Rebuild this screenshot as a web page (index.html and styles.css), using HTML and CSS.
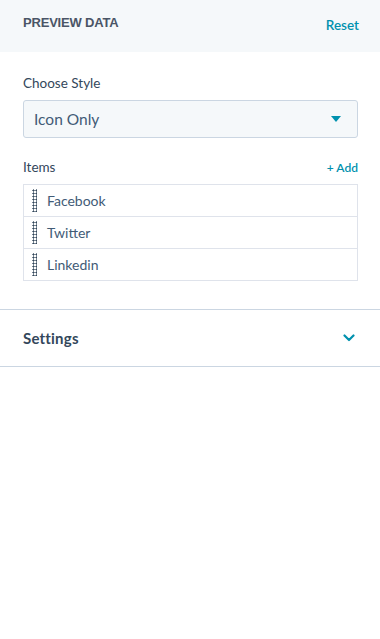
FILE: index.html
```html
<!DOCTYPE html>
<html lang="en">
<head>
    <meta charset="UTF-8">
    <meta name="viewport" content="width=device-width, initial-scale=1.0">
    <title>Preview data</title>
    <link rel="stylesheet" href="styles.css">
</head>
<body>

    <div class="panel-header">
        <span class="panel-title">PREVIEW DATA</span>
        <a class="link reset-link" href="#">Reset</a>
    </div>

    <div class="panel-body">
        <div class="field-label">Choose Style</div>
        <div class="select-box">
            <span>Icon Only</span>
            <span class="select-caret"></span>
        </div>

        <div class="items-head">
            <span class="field-label">Items</span>
            <a class="link add-link" href="#">+ Add</a>
        </div>

        <ul class="item-list">
            <li class="item-row"><span class="drag-handle"></span>Facebook</li>
            <li class="item-row"><span class="drag-handle"></span>Twitter</li>
            <li class="item-row"><span class="drag-handle"></span>Linkedin</li>
        </ul>
    </div>

    <div class="accordion">
        <span class="accordion-title">Settings</span>
        <svg class="chevron" width="12" height="8" viewBox="0 0 12 8">
            <path d="M1.5 1.5 L6 6 L10.5 1.5" fill="none" stroke="#0091ae" stroke-width="2.2" stroke-linecap="round" stroke-linejoin="round"/>
        </svg>
    </div>

</body>
</html>
```

FILE: styles.css
```css
body {
    margin: 0;
    font-family: 'Lato', 'Open Sans', sans-serif;
    color: #33475b;
    background-color: #fff;
}

.link {
    color: #0091ae;
    text-decoration: none;
    font-weight: 600;
}

/* top bar */
.panel-header {
    height: 52px;
    background-color: #f5f8fa;
    display: flex;
    justify-content: space-between;
    padding: 0 21px 0 23px;
    box-sizing: border-box;
}

.panel-title {
    font-family: 'Liberation Sans', Arial, sans-serif;
    font-size: 13px;
    font-weight: 600;
    color: #4a5566;
    margin-top: 15px;
    letter-spacing: -0.2px;
}

.reset-link {
    font-size: 13.5px;
    margin-top: 17px;
}

/* preview fields */
.panel-body {
    padding: 23px 22px 28px 23px;
}

.field-label {
    font-size: 13.5px;
    color: #33475b;
    line-height: 16px;
}

.select-box {
    margin-top: 9px;
    height: 38px;
    box-sizing: border-box;
    border: 1px solid #cbd6e2;
    border-radius: 3px;
    background-color: #f5f8fa;
    display: flex;
    align-items: center;
    justify-content: space-between;
    padding: 0 16px 0 10px;
    font-size: 15.5px;
    color: #425b76;
}

.select-caret {
    width: 0;
    height: 0;
    border-left: 5px solid transparent;
    border-right: 5px solid transparent;
    border-top: 6px solid #0091ae;
}

.items-head {
    margin-top: 21px;
    display: flex;
    justify-content: space-between;
    align-items: center;
}

.add-link {
    font-size: 12px;
}

.item-list {
    list-style: none;
    margin: 9px 0 0 0;
    padding: 0;
    border: 1px solid #dfe3eb;
}

.item-row {
    height: 31px;
    display: flex;
    align-items: center;
    font-size: 14px;
    color: #425b76;
    border-top: 1px solid #dfe3eb;
    padding-left: 8px;
}

.item-row:first-child {
    border-top: none;
}

.drag-handle {
    width: 5px;
    height: 23px;
    margin-right: 10px;
    background-image: radial-gradient(circle, #33475b 0.9px, transparent 1.2px);
    background-size: 3px 3px;
    background-position: 0 0;
}

/* collapsed section */
.accordion {
    height: 58px;
    box-sizing: border-box;
    border-top: 1px solid #cbd6e2;
    border-bottom: 1px solid #cbd6e2;
    display: flex;
    align-items: center;
    justify-content: space-between;
    padding: 0 25px 0 23px;
}

.accordion-title {
    font-size: 15px;
    font-weight: 700;
    letter-spacing: 0.2px;
}
```
